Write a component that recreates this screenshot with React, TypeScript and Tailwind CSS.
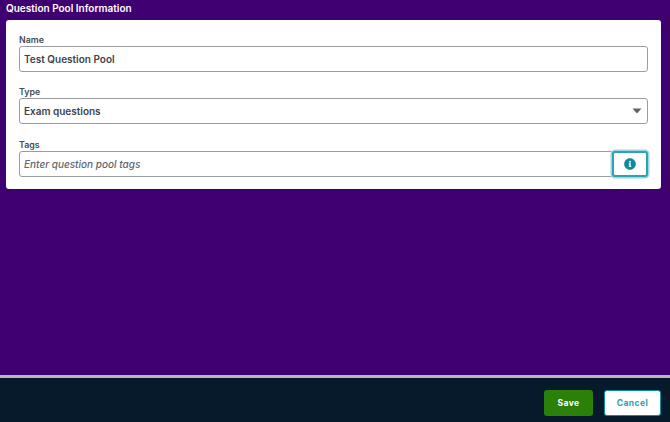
export default function App() {
  return (
    <div className="h-[422px] w-[670px] flex flex-col bg-[#3f0071] font-['Inter',sans-serif] overflow-hidden">
      {/* Form area */}
      <div className="flex-1 pl-[6px] pr-[9px]">
        <h1 className="text-[10px] leading-[16px] font-semibold text-white h-[20px]">
          Question Pool Information
        </h1>
        <div className="bg-white rounded-[3px] px-[13px] pt-[14px] h-[169px]">
          <label className="block text-[8.8px] leading-[12px] font-semibold text-[#444b52]">Name</label>
          <input
            readOnly
            value="Test Question Pool"
            className="block w-full h-[26px] border border-[#9a9ca0] rounded-[3px] px-[4px] text-[10px] font-semibold text-[#3c434a] outline-none"
          />
          <label className="block text-[8.8px] leading-[12px] font-semibold text-[#444b52] mt-[14px]">Type</label>
          <div className="flex items-center justify-between w-full h-[26px] border border-[#9a9ca0] rounded-[3px] pl-[4px] pr-[5px] text-[10px] font-semibold text-[#3c434a]">
            <span>Exam questions</span>
            <svg width="10" height="6" viewBox="0 0 10 6">
              <path d="M0.5 0.5h9L5 5.5z" fill="#5f6368" />
            </svg>
          </div>
          <label className="block text-[8.8px] leading-[12px] font-semibold text-[#444b52] mt-[15px]">Tags</label>
          <div className="flex h-[26px]">
            <input
              readOnly
              placeholder="Enter question pool tags"
              className="flex-1 min-w-0 h-full border border-[#9a9ca0] rounded-l-[3px] px-[4px] text-[10px] font-medium italic text-[#5f6670] placeholder:text-[#5f6670] outline-none"
            />
            <button className="w-[36px] h-full flex items-center justify-center bg-white border-[2px] border-[#2ba3b3] rounded-[3px] shadow-[0_0_0_1.5px_#9fd6dd]">
              <svg width="12" height="12" viewBox="0 0 512 512">
                <path
                  fill="#0d8a9c"
                  d="M256 8C119 8 8 119 8 256s111 248 248 248 248-111 248-248S393 8 256 8zm0 110a42 42 0 1 1 0 84 42 42 0 0 1 0-84zm56 254c0 7-5 12-12 12h-88c-7 0-12-5-12-12v-24c0-7 5-12 12-12h12v-64h-12c-7 0-12-5-12-12v-24c0-7 5-12 12-12h64c7 0 12 5 12 12v100h12c7 0 12 5 12 12v24z"
                />
              </svg>
            </button>
          </div>
        </div>
      </div>
      {/* Footer */}
      <div className="h-[47px] bg-[#061a2b] border-t-[3px] border-[#b9b6bd] flex items-end justify-end gap-[11px] pr-[9px] pb-[6px]">
        <button className="w-[49px] h-[26px] bg-[#2a8008] rounded-[3px] text-white text-[8.5px] font-bold tracking-[0.4px]">Save</button>
        <button className="w-[57px] h-[26px] bg-white border border-[#0d8fa0] rounded-[3px] text-[#2b9fb0] text-[8.5px] font-bold tracking-[0.4px]">Cancel</button>
      </div>
    </div>
  );
}
